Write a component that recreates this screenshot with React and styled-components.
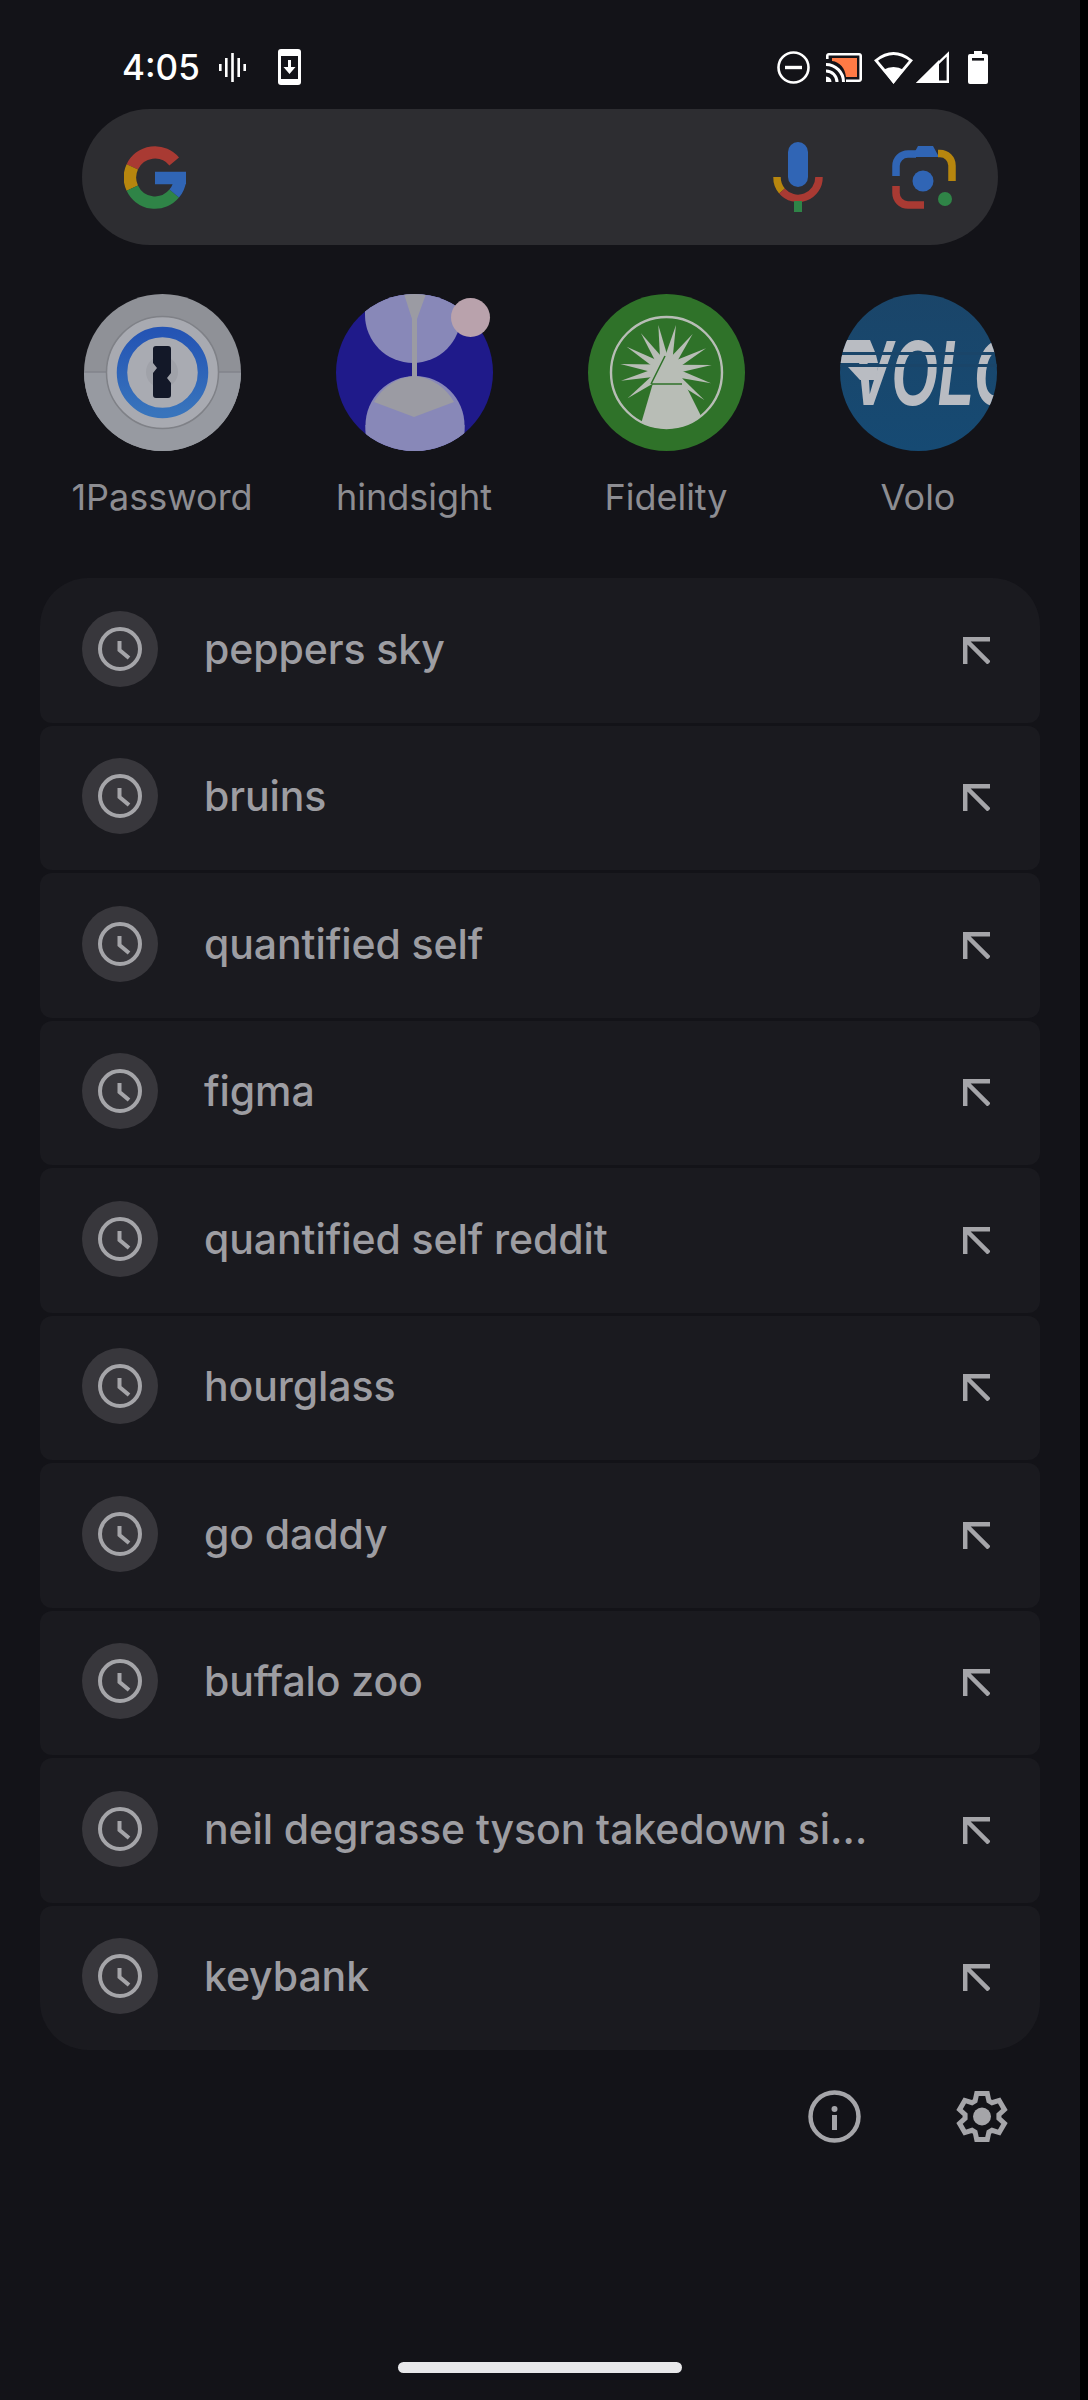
import React from "react";
import styled, { createGlobalStyle } from "styled-components";

const Global = createGlobalStyle`
  html, body { margin: 0; padding: 0; background: #000; }
  * { box-sizing: border-box; }
`;

const Screen = styled.div`
  width: 1080px;
  height: 2400px;
  background: #131318;
  font-family: Inter, "Noto Sans", sans-serif;
  display: flex;
  flex-direction: column;
  overflow: hidden;
`;

const StatusBar = styled.div`
  height: 109px;
  padding: 50px 92px 0 122px;
  display: flex;
  justify-content: space-between;
  align-items: flex-start;
  flex: none;
`;

const StatusGroup = styled.div`
  display: flex;
  align-items: center;
  height: 34px;
`;

const Slot = styled.span`
  display: flex;
  margin-left: ${(p) => p.$ml || 0}px;
`;

const Time = styled.span`
  color: #fff;
  font-size: 35px;
  line-height: 34px;
  font-weight: 500;
`;

const SearchBar = styled.div`
  margin-left: 82px;
  width: 916px;
  height: 136px;
  border-radius: 68px;
  background: #2d2d31;
  display: flex;
  align-items: center;
  padding: 0 42px;
  flex: none;
`;

const SearchRight = styled.div`
  margin-left: auto;
  display: flex;
  align-items: center;
  gap: 69px;
`;

const AppRow = styled.div`
  margin-top: 49px;
  padding-left: 43px;
  display: grid;
  grid-template-columns: repeat(4, 252px);
  flex: none;
`;

const AppItem = styled.div`
  display: flex;
  flex-direction: column;
  align-items: center;
  width: 238px;
`;

const AppIcon = styled.div`
  position: relative;
  width: 157px;
  height: 157px;
  flex: none;
`;

const Badge = styled.span`
  position: absolute;
  top: 4px;
  right: 3px;
  width: 39px;
  height: 39px;
  border-radius: 50%;
  background: #b9a2ac;
`;

const AppLabel = styled.span`
  margin-top: 22px;
  font-size: 36px;
  line-height: 48px;
  color: #8d8d92;
  white-space: nowrap;
`;

const Panel = styled.div`
  margin: 57px 0 0 40px;
  width: 1000px;
  display: flex;
  flex-direction: column;
  gap: 3px;
  flex: none;
`;

const Row = styled.div`
  height: 144.5px;
  background: #1a1a1f;
  border-radius: ${(p) => (p.$first ? "48px 48px 12px 12px" : p.$last ? "12px 12px 48px 48px" : "12px")};
  display: flex;
  align-items: center;
  padding: 0 50px 3px 42px;
`;

const ClockBadge = styled.div`
  width: 76px;
  height: 76px;
  border-radius: 50%;
  background: #38373c;
  display: flex;
  align-items: center;
  justify-content: center;
  flex: none;
`;

const RowText = styled.span`
  margin-left: 46px;
  font-size: 41px;
  line-height: 56px;
  font-weight: 500;
  letter-spacing: -0.1px;
  color: #9d9da2;
  white-space: nowrap;
  flex: 1;
`;

const ArrowSvg = styled.svg`
  flex: none;
  margin-top: 3px;
`;

const Footer = styled.div`
  margin: 40px 0 0 808px;
  width: 200px;
  display: flex;
  justify-content: space-between;
`;

const HomeBar = styled.div`
  margin: auto 0 27px 398px;
  width: 284px;
  height: 11px;
  border-radius: 6px;
  background: #e8e8ea;
`;

const Clock = () => (
  <svg width="44" height="44" viewBox="0 0 44 44" fill="none" stroke="#a5a5a9" strokeWidth="4">
    <circle cx="22" cy="22" r="20" />
    <path d="M21.500 14V23L31 31" />
  </svg>
);

const Arrow = () => (
  <ArrowSvg width="27" height="27" viewBox="0 0 27 27" fill="none" stroke="#a5a5a9" strokeWidth="4.500">
    <path d="M27 2.200H2.200V27M2.500 2.500L26 26" />
  </ArrowSvg>
);

const Info = () => (
  <svg width="53" height="53" viewBox="0 0 53 53" fill="none" stroke="#a5a5a9" strokeWidth="4.5">
    <circle cx="26.5" cy="26.5" r="24" />
    <path d="M26.5 25v15" strokeWidth="5" />
    <circle cx="26.5" cy="19" r="3" fill="#a5a5a9" stroke="none" />
  </svg>
);

const gearPath = () => {
  const c = 26;
  const pts = [];
  const at = (r, deg) => {
    const a = (deg * Math.PI) / 180;
    return `${(c + r * Math.cos(a)).toFixed(2)} ${(c + 0.5 + r * Math.sin(a)).toFixed(2)}`;
  };
  for (let k = 0; k < 6; k++) {
    const a = k * 60 - 90;
    pts.push(at(17, a - 24), at(23.5, a - 13), at(23.5, a + 13), at(17, a + 24));
  }
  return `M${pts.join("L")}Z`;
};

const Gear = () => (
  <svg width="52" height="53" viewBox="0 0 52 53" fill="none">
    <path d={gearPath()} stroke="#a5a5a9" strokeWidth="5" strokeLinejoin="miter" />
    <circle cx="26" cy="26.500" r="9" fill="#a5a5a9" />
  </svg>
);

const GoogleG = () => (
  <svg width="62" height="63" viewBox="0 0 62 63" fill="none" strokeWidth="12.500">
    <path d="M50.200 15.400A25 25 0 0 0 8.300 20.900" stroke="#a93a33" />
    <path d="M8.300 20.900A25 25 0 0 0 8.300 42.100" stroke="#b7860e" />
    <path d="M8.300 42.100A25 25 0 0 0 50.200 47.600" stroke="#2f8447" />
    <path d="M50.200 47.600A25 25 0 0 0 56 32" stroke="#3065b5" />
    <path d="M31 32H62" stroke="#3065b5" />
  </svg>
);

const Mic = () => (
  <svg width="50" height="70" viewBox="0 0 50 70" fill="none">
    <rect x="15" y="0" width="20" height="45" rx="10" fill="#3065b5" />
    <path d="M4 35A21 21 0 0 0 9 49" stroke="#b7860e" strokeWidth="7.500" />
    <path d="M9 49A21 21 0 0 0 46 35" stroke="#a93a33" strokeWidth="7.500" />
    <rect x="21" y="59" width="8" height="11" fill="#2f8447" />
  </svg>
);

const Lens = () => (
  <svg width="64" height="63" viewBox="0 0 64 63" fill="none" strokeWidth="7.500">
    <path d="M4 30V20A12 12 0 0 1 16 8H24" stroke="#3065b5" />
    <path d="M26 0H41L47 11H20Z" fill="#3065b5" />
    <path d="M46 7.500H48A12 12 0 0 1 60 19.500V35" stroke="#b7860e" />
    <path d="M4 40V47A12 12 0 0 0 16 59H32" stroke="#a93a33" />
    <circle cx="31" cy="35" r="10.500" fill="#3065b5" />
    <circle cx="53" cy="53" r="7" fill="#2f8447" />
  </svg>
);

const Vibrate = () => (
  <svg width="27" height="29" viewBox="0 0 27 29" fill="#fff">
    <rect x="0" y="11" width="2.600" height="7" />
    <rect x="6" y="5" width="2.600" height="19" />
    <rect x="12.200" y="0" width="2.600" height="29" />
    <rect x="18.400" y="5" width="2.600" height="19" />
    <rect x="24.400" y="11" width="2.600" height="7" />
  </svg>
);

const PhoneDl = () => (
  <svg width="23" height="36" viewBox="0 0 23 36">
    <rect width="23" height="36" rx="3" fill="#fff" />
    <rect x="3" y="7" width="17" height="23" fill="#131318" />
    <path d="M10 11h3v7h4.500l-6 7-6-7H10z" fill="#fff" />
  </svg>
);

const Dnd = () => (
  <svg width="33" height="33" viewBox="0 0 33 33" fill="none" stroke="#fff">
    <circle cx="16.500" cy="16.500" r="15" strokeWidth="2.600" />
    <path d="M8 16.500h17" strokeWidth="3.400" />
  </svg>
);

const Cast = () => (
  <svg width="36" height="29" viewBox="0 0 36 29" fill="none">
    <path d="M1.300 6V2.800A1.500 1.500 0 0 1 2.800 1.300H33.200A1.500 1.500 0 0 1 34.700 2.800V26.200A1.500 1.500 0 0 1 33.200 27.700H20" stroke="#fff" strokeWidth="2.600" />
    <path d="M6 5H31V24H20C19 15 14 9 6 8Z" fill="#ff7a45" />
    <path d="M0 11.500A17.500 17.500 0 0 1 17.500 29M0 18A11 11 0 0 1 11 29" stroke="#fff" strokeWidth="3" />
    <path d="M0 23.500A5.500 5.500 0 0 1 5.500 29H0Z" fill="#fff" />
  </svg>
);

const Wifi = () => (
  <svg width="39" height="33" viewBox="0 0 39 33" fill="none">
    <path d="M2 9.500Q19.500 -4.500 37 9.500L19.500 30.500Z" stroke="#fff" strokeWidth="2.800" />
    <path d="M9 19Q19.500 13 30 19L19.500 33Z" fill="#fff" />
  </svg>
);

const Signal = () => (
  <svg width="33" height="32" viewBox="0 0 33 32" fill="none">
    <path d="M31.800 3V30.800H3Z" stroke="#fff" strokeWidth="2.400" />
    <path d="M23 9V32H0Z" fill="#fff" />
  </svg>
);

const Battery = () => (
  <svg width="20" height="33" viewBox="0 0 20 33">
    <path d="M6 0H14V3H18A2 2 0 0 1 20 5V31A2 2 0 0 1 18 33H2A2 2 0 0 1 0 31V5A2 2 0 0 1 2 3H6Z" fill="#fff" />
    <rect x="4" y="7" width="12" height="2.600" fill="#131318" />
  </svg>
);

const OnePassword = () => (
  <svg width="157" height="157" viewBox="0 0 157 157">
    <defs>
      <linearGradient id="op-ring" x1="0" y1="0" x2="0" y2="1">
        <stop offset="0" stopColor="#2454b4" />
        <stop offset="1" stopColor="#3874bc" />
      </linearGradient>
    </defs>
    <circle cx="78.5" cy="78.5" r="78.5" fill="#8f9197" />
    <path d="M0 78.500A78.500 78.500 0 0 0 157 78.500Z" fill="#979aa1" />
    <path d="M0 78h157" stroke="#7d7f85" strokeWidth="1.200" />
    <circle cx="78.5" cy="78.5" r="56" fill="#a8aab1" stroke="#7f8187" strokeWidth="1.500" />
    <circle cx="78.5" cy="78.5" r="40.500" fill="#a9abb2" stroke="url(#op-ring)" strokeWidth="10.500" />
    <circle cx="78" cy="78" r="16" fill="#a0a2a9" />
    <path d="M72 52H84A3 3 0 0 1 87 55V79L83 84L87 89V101A3 3 0 0 1 84 104H72A3 3 0 0 1 69 101V79L73 74L69 69V55A3 3 0 0 1 72 52Z" fill="#131828" />
  </svg>
);

const Hindsight = () => (
  <svg width="157" height="157" viewBox="0 0 157 157">
    <defs>
      <clipPath id="hs"><circle cx="78.5" cy="78.5" r="78.5" /></clipPath>
    </defs>
    <g clipPath="url(#hs)">
      <rect width="157" height="157" fill="#1f1a8a" />
      <circle cx="77" cy="21" r="48" fill="#8888b8" />
      <rect x="29" y="0" width="96" height="21" fill="#8888b8" />
      <circle cx="79" cy="131.500" r="49.500" fill="#8888b8" />
      <rect x="29.500" y="131" width="99" height="26" fill="#8888b8" />
      <path d="M38 108A50 50 0 0 1 79 82A50 50 0 0 1 118 108L78 123Z" fill="#9b9ba3" />
      <path d="M68 0H90L81 25V84H76V25Z" fill="#9b9ba3" />
    </g>
  </svg>
);

const tips = [
  [292, 165], [345, 165], [395, 192], [435, 235], [452, 285], [450, 340], [430, 390],
  [240, 190], [197, 230], [178, 282], [180, 332], [200, 385],
].map(([x, y]) => [x / 3 - 27, y / 3 - 24]);

const spike = ([x, y]) => {
  const cx = 78;
  const cy = 76;
  const dx = x - cx;
  const dy = y - cy;
  const d = Math.hypot(dx, dy);
  const ux = dx / d;
  const uy = dy / d;
  const bx = cx + ux * 12;
  const by = cy + uy * 12;
  const w = 4;
  return `${bx - uy * w},${by + ux * w} ${x},${y} ${bx + uy * w},${by - ux * w}`;
};

const Fidelity = () => (
  <svg width="157" height="157" viewBox="0 0 157 157">
    <defs>
      <clipPath id="fd"><circle cx="78.5" cy="78.500" r="56" /></clipPath>
    </defs>
    <circle cx="78.5" cy="78.500" r="78.500" fill="#2f7229" />
    <circle cx="78.5" cy="78.500" r="55.500" fill="none" stroke="#b8bdb6" strokeWidth="2.400" />
    {tips.map((t, i) => (
      <polygon key={i} points={spike(t)} fill="#b8bdb6" />
    ))}
    <circle cx="78" cy="76" r="15" fill="#b8bdb6" />
    <path d="M70 72H88L122 140H50Z" fill="#b8bdb6" clipPath="url(#fd)" />
    <path d="M77 62L63 90" stroke="#2f7229" strokeWidth="1.500" />
    <path d="M64 90H94" stroke="#2f7229" strokeWidth="1.500" />
  </svg>
);

const VoloLogo = () => (
  <svg width="157" height="157" viewBox="0 0 157 157">
    <defs>
      <clipPath id="vl"><circle cx="78.5" cy="78.500" r="78.500" /></clipPath>
      <linearGradient id="vl-bg" x1="0" y1="0" x2="0" y2="1">
        <stop offset="0" stopColor="#1a4569" />
        <stop offset="1" stopColor="#164a73" />
      </linearGradient>
    </defs>
    <g clipPath="url(#vl)">
      <rect width="157" height="157" fill="url(#vl-bg)" />
      <text
        x="12"
        y="111"
        fontFamily="Liberation Sans, sans-serif"
        fontWeight="700"
        fontStyle="italic"
        fontSize="93"
        fill="#b9bcc2"
        textLength="168"
        lengthAdjust="spacingAndGlyphs"
      >
        VOLO
      </text>
      <path d="M0 46H30L35 58H0Z" fill="#b9bcc2" />
      <path d="M0 61H36L38 69H0Z" fill="#b9bcc2" />
      <path d="M8 73H38L36 86H20Z" fill="#b9bcc2" />
      <rect x="0" y="58" width="157" height="3" fill="#1a4569" />
      <rect x="0" y="70" width="157" height="3" fill="#1a4569" />
    </g>
  </svg>
);

const apps = [
  { name: "1Password", icon: <OnePassword /> },
  { name: "hindsight", icon: <Hindsight />, badge: true },
  { name: "Fidelity", icon: <Fidelity /> },
  { name: "Volo", icon: <VoloLogo /> },
];

const searches = [
  "peppers sky",
  "bruins",
  "quantified self",
  "figma",
  "quantified self reddit",
  "hourglass",
  "go daddy",
  "buffalo zoo",
  "neil degrasse tyson takedown si…",
  "keybank",
];

export default function App() {
  return (
    <>
      <Global />
      <Screen>
        <StatusBar>
          <StatusGroup>
            <Time>4:05</Time>
            <Slot $ml={19}><Vibrate /></Slot>
            <Slot $ml={32}><PhoneDl /></Slot>
          </StatusGroup>
          <StatusGroup>
            <Slot><Dnd /></Slot>
            <Slot $ml={16}><Cast /></Slot>
            <Slot $ml={12}><Wifi /></Slot>
            <Slot $ml={3}><Signal /></Slot>
            <Slot $ml={19}><Battery /></Slot>
          </StatusGroup>
        </StatusBar>
        <SearchBar>
          <GoogleG />
          <SearchRight>
            <Mic />
            <Lens />
          </SearchRight>
        </SearchBar>
        <AppRow>
          {apps.map((a) => (
            <AppItem key={a.name}>
              <AppIcon>
                {a.icon}
                {a.badge && <Badge />}
              </AppIcon>
              <AppLabel>{a.name}</AppLabel>
            </AppItem>
          ))}
        </AppRow>
        <Panel>
          {searches.map((s, i) => (
            <Row key={s} $first={i === 0} $last={i === searches.length - 1}>
              <ClockBadge>
                <Clock />
              </ClockBadge>
              <RowText>{s}</RowText>
              <Arrow />
            </Row>
          ))}
        </Panel>
        <Footer>
          <Info />
          <Gear />
        </Footer>
        <HomeBar />
      </Screen>
    </>
  );
}
